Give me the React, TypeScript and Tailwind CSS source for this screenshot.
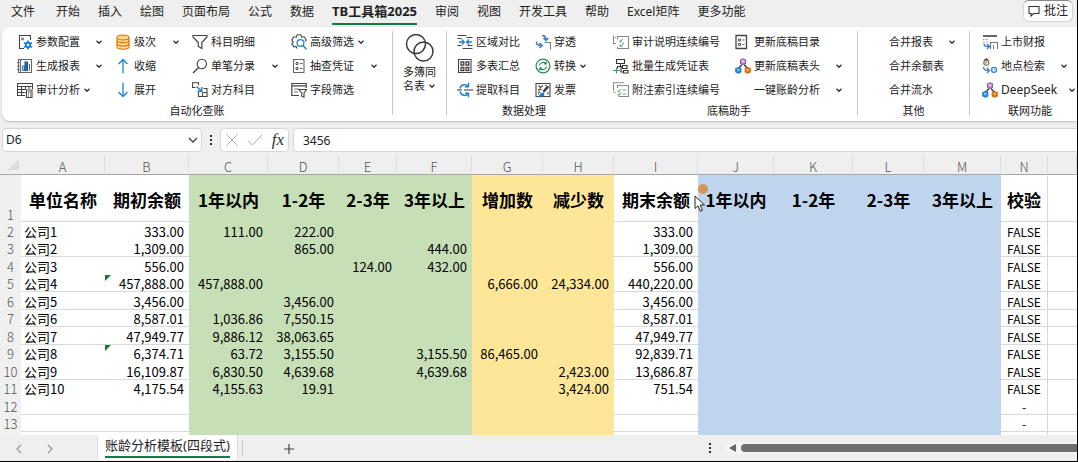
import type { ReactNode } from "react";
import clsx from "clsx";

type Item = {
  label: string;
  icon?: ReactNode;
  caret?: "inline" | "end" | "inset";
};

const Icon = ({ children }: { children?: ReactNode }) => (
  <svg
    viewBox="0 0 16 16"
    className="w-4 h-4 shrink-0"
    fill="none"
    stroke="#444"
    strokeWidth="1.1"
  >
    {children}
  </svg>
);

const Caret = ({ className }: { className?: string }) => (
  <svg
    viewBox="0 0 8 8"
    className={clsx("w-2 h-2 shrink-0", className)}
    fill="none"
    stroke="#333"
    strokeWidth="1.3"
  >
    <path d="M1.5 2.8 4 5.3 6.5 2.8" />
  </svg>
);

const blue = "#1e82d2";

const configIcon = (
  <Icon>
    <path d="M7 14.5H2.5v-13h11V6" />
    <circle cx="5.5" cy="5" r="1" strokeWidth="0.9" />
    <g stroke={blue}>
      <path d="M11 6.5v9M7 8.700l8 4.600M7 13.300l8-4.600" strokeWidth="1.8" />
      <circle cx="11" cy="11" r="2.6" fill={blue} />
      <circle cx="11" cy="11" r="0.7" fill="#fff" stroke="#fff" />
    </g>
  </Icon>
);

const reportIcon = (
  <Icon>
    <path d="M1.5 1.5h13v13h-13zM3.5 1.5v13M0 4.5h2.5M0 8h2.5M0 11.5h2.5" stroke="#666" />
    <path d="M5.5 12.5V8h2v4.500z" fill="#9cc8ee" stroke="#4b88be" />
    <path d="M8 12.500V4h2.500v8.500z" fill="#1a70b8" stroke="#185c98" />
    <path d="M12.500 12.500V6" stroke="#666" />
  </Icon>
);

const auditIcon = (
  <Icon>
    <path d="M8 13.500H.5v-12h15V7M.5 4.500h15M.5 7.500h8M.5 10.500h8M4.500 4.500v9M8.500 4.500V8M12 4.500V7" />
    <path d="M9.500 8h5.500v7.500H9.500z" fill="#fff" />
    <path d="M11 10h3M11 12h1M13 12h1M11 14h1M13 14h1" />
  </Icon>
);

const levelIcon = (
  <Icon>
    <g stroke="#d87300" fill="#ffd890">
      <path d="M2 3.500v9.500c0 3 12 3 12 0V3.500" />
      <path d="M2 6.500c0 3 12 3 12 0M2 9.800c0 3 12 3 12 0" fill="none" />
      <ellipse cx="8" cy="3.500" rx="6" ry="2.500" />
    </g>
  </Icon>
);

const upIcon = (
  <Icon>
    <path d="M8 15.500V1.500M3.500 6 8 1.500 12.500 6" stroke={blue} strokeWidth="1.300" />
  </Icon>
);

const downIcon = (
  <Icon>
    <path d="M8 .5v14M3.500 10 8 14.500 12.500 10" stroke={blue} strokeWidth="1.300" />
  </Icon>
);

const funnelIcon = (
  <Icon>
    <path d="M1 1.500h14v1.500L9.800 8.500v6l-3.500-2v-4L1 3z" strokeWidth="1.200" />
  </Icon>
);

const searchIcon = (
  <Icon>
    <circle cx="9.800" cy="6" r="4.700" />
    <path d="M6.500 9.500 1 15" strokeWidth="1.400" />
  </Icon>
);

const linkIcon = (
  <Icon>
    <path d="M3.500 5.500h-3V.8h6v2.500M6.500 10v4.500H15v-8h-3.500M10.500 10.500h4.500M10.500 10.500v4" />
    <path d="M4.500 4.500 9.500 9M9.800 5v4.300H5.500" stroke={blue} strokeWidth="1.500" />
  </Icon>
);

const gearSearchIcon = (
  <Icon>
    <path d="M6 14.500 5.200 12.500 2.800 12.800.8 9.500 2.300 8 .8 6l2-3.200 2.500.4L6.200.8h3.600l.9 2.400 2.500-.4 2 3.200-1 1.500" />
    <circle cx="9.500" cy="9" r="3.400" stroke={blue} strokeWidth="1.300" />
    <path d="m12 11.500 3.500 3.700" stroke={blue} strokeWidth="1.500" />
  </Icon>
);

const checklistIcon = (
  <Icon>
    <path d="M2.500 1.500h10.500v13H2.500z" stroke="#666" />
    <path d="M5 4.500h2v2H5zM5 9.500h2v2H5zM9 5.500h2.500M9 10.500h2.500" strokeWidth="0.900" />
  </Icon>
);

const fieldFilterIcon = (
  <Icon>
    <path d="M8 13.500H.8v-12h14.400V6M.8 3.800h14.400" strokeWidth="1.200" />
    <path d="M3 7h5M3 10h4" stroke="#777" />
    <path d="M8 7.500h7.500L13 11v4.200l-2.300-1V11z" fill="#fff" />
  </Icon>
);

const compareIcon = (
  <Icon>
    <path d="M.5 1.500h9M.5 4.500h4M9.500 3.500h6M.5 11.500h4M5.500 14.500h10M10.500 11.500h5" />
    <path d="M2 8h5M4.800 5.500 7.300 8l-2.500 2.500M15 8h-5M12 5.500 9.500 8l2.500 2.500" stroke={blue} strokeWidth="1.300" />
  </Icon>
);

const gridIcon = (
  <Icon>
    <path d="M1.500 1.500h12.500v13H1.500z" />
    <path d="M4 4h2.800v3H4zM9 4h2.800v3H9zM4 9.500h2.800v3H4zM9 9.500h2.800v3H9z" strokeWidth="1.300" />
  </Icon>
);

const extractIcon = (
  <Icon>
    <path d="M0 8h5M7 8h9" stroke="#333" strokeWidth="1.200" />
    <path d="M11.500 4.500A4.800 4.800 0 0 0 3 6.500M3 9.500a4.800 4.800 0 0 0 8.500 2M11.500.8v4H7.800M11.500 15.200v-4H8" stroke={blue} strokeWidth="1.400" />
  </Icon>
);

const traceIcon = (
  <Icon>
    <path d="M7 1.500c3 0 4 2 4 4.500M8.500 4 11 6.500 13.500 4M1.500 7.500c-.5 3 1.500 4 4.500 4M4.500 9 7 11.500 4.500 14" stroke="#3a7dc4" strokeWidth="1.500" />
    <path d="M9.500 8.500h6v7" stroke="#777" />
  </Icon>
);

const convertIcon = (
  <Icon>
    <g stroke="#2c8a57">
      <circle cx="8" cy="8" r="6.900" strokeWidth="1.300" />
      <path d="M4.500 7.500a3.600 3.600 0 0 1 6.500-1.600M11.500 8.500A3.600 3.600 0 0 1 5 10.100M11.200 3.500V6H8.700M4.800 12.500V10h2.500" strokeWidth="1.200" />
    </g>
  </Icon>
);

const invoiceIcon = (
  <Icon>
    <path d="M1 1.500h14v13H1z" />
    <path d="M3.500 3.500l2 2 2.500-2M3 8.500l2-1.500 1.500 1M3 11.500l2-2M10 3.500h1.500M13 10v2.500" />
    <path d="M14 4.500 8.500 10.500M12.500 4 8 9.500" strokeWidth="1.200" />
    <path d="M4 15c1-.5.5-3 2.500-3.500s3 .5 2 2-2.500 1.500-4.500 1.500z" fill={blue} stroke="#1d6fb8" />
  </Icon>
);

const numberIcon = (
  <Icon>
    <path d="M.5 1.500V9.500H3M2 3.500h1M4.500 5.500v-3h11v12h-11v-2M9 2.500h6" stroke="#888" />
    <path d="m6.500 6.500 1 1.500 2-3M6.500 11l1.500 1.500 3-4" stroke="#58a272" />
  </Icon>
);

const voucherIcon = (
  <Icon>
    <path d="M3.500 1.500h8v4h-8zM7.500 5.500v3M4.500 10.500V8.500h5M9.500 7.500h4.500v3H9.500zM10.500 12.500h4.500v2.500h-4.500zM8 9v5h2.500" stroke="#333" />
    <path d="M0 12.500h7M3.500 9.500v6" stroke="#3f9b62" />
  </Icon>
);

const noteIcon = (
  <Icon>
    <path d="M.5 9V.8H11M2.500 10.500H.5M4.500 6V3.500h11v11h-10" stroke="#888" />
    <path d="m4.500 8.500 1 1.500 2-3M4.500 12l1.500 1.500 2-3M9.500 8h4M9.500 12h4" stroke="#7ba98a" />
  </Icon>
);

const catalogIcon = (
  <Icon>
    <path d="M1 1.500h10.500v13H1z" strokeWidth="1.300" />
    <path d="M3.500 5h2v2h-2zM3.500 9.500h2v2h-2zM7.500 6H9.500M7.500 10.500h2" strokeWidth="0.900" />
  </Icon>
);

const cubesIcon = (
  <Icon>
    <path d="M7 6.500 3.500 10.500M9 6.500l3.500 4" stroke="#333" strokeWidth="1.300" />
    <path d="m8 .8 2.500 1v3.500L8 6.500l-2.500-1.200V1.800z" fill="#c49acb" stroke="#955ba5" />
    <path d="m3.300 9.500 2.500 1v3.500l-2.500 1.200L.8 14v-3.500z" fill="#2f93e0" stroke="#1775c4" />
    <path d="m12.700 9.500 2.500 1v3.500l-2.500 1.200-2.500-1.200v-3.500z" fill="#e87c1a" stroke="#d06400" />
    <path d="M2 11.500l1.300.6 1.300-.6M11.400 11.500l1.300.6 1.300-.6M6.800 2.800l1.200.6 1.200-.6" stroke="#fff" strokeWidth="0.800" />
  </Icon>
);

const marketIcon = (
  <Icon>
    <path d="M1 2h14" stroke="#666" strokeWidth="2" />
    <path d="M1 5.500h1.500M4 5.500h1.500M1 8h1.500M4 8h1.500" stroke="#999" />
    <path d="M8.500 15V8.500h7V15M11.500 15v-4" stroke="#777" />
    <path d="M2 9.500c0 3 2 3 5 3M5 10l2.500 2.500L5 15" stroke="#3a7dc4" strokeWidth="1.300" />
  </Icon>
);

const placeIcon = (
  <Icon>
    <path d="M2 2.500 4.500.8 6.500 2.500M3 1.500h3" stroke="#555" />
    <circle cx="4.300" cy="4.800" r="2.500" stroke="#666" />
    <path d="m3 5 2-1" stroke="#e07a1a" strokeWidth="1.500" />
    <path d="M1.500 9c0 3 2 3.500 5 3.500M5 10l2.500 2.500L5 15" stroke="#3a7dc4" strokeWidth="1.300" />
    <circle cx="12" cy="11.800" r="2.600" fill="#9cc7ec" stroke="#3a7dc4" />
    <path d="M10.500 11h3M10.500 12.800h3" stroke="#fff" strokeWidth="0.700" />
  </Icon>
);

const autoCheck: { width: string; items: Item[] }[] = [
  {
    width: "w-[86px]",
    items: [
      { label: "参数配置", icon: configIcon, caret: "end" },
      { label: "生成报表", icon: reportIcon, caret: "end" },
      { label: "审计分析", icon: auditIcon, caret: "inline" },
    ],
  },
  {
    width: "w-[65px]",
    items: [
      { label: "级次", icon: levelIcon, caret: "end" },
      { label: "收缩", icon: upIcon },
      { label: "展开", icon: downIcon },
    ],
  },
  {
    width: "w-[87px]",
    items: [
      { label: "科目明细", icon: funnelIcon },
      { label: "单笔分录", icon: searchIcon, caret: "end" },
      { label: "对方科目", icon: linkIcon },
    ],
  },
  {
    width: "w-[87px]",
    items: [
      { label: "高级筛选", icon: gearSearchIcon, caret: "inline" },
      { label: "抽查凭证", icon: checklistIcon, caret: "end" },
      { label: "字段筛选", icon: fieldFilterIcon },
    ],
  },
];

const dataProcess: { width: string; items: Item[] }[] = [
  {
    width: "w-[66px]",
    items: [
      { label: "区域对比", icon: compareIcon },
      { label: "多表汇总", icon: gridIcon },
      { label: "提取科目", icon: extractIcon },
    ],
  },
  {
    width: "w-[66px]",
    items: [
      { label: "穿透", icon: traceIcon },
      { label: "转换", icon: convertIcon, caret: "inline" },
      { label: "发票", icon: invoiceIcon },
    ],
  },
];

const draftHelper: { width: string; items: Item[] }[] = [
  {
    width: "w-[110px]",
    items: [
      { label: "审计说明连续编号", icon: numberIcon },
      { label: "批量生成凭证表", icon: voucherIcon },
      { label: "附注索引连续编号", icon: noteIcon },
    ],
  },
  {
    width: "w-[108px]",
    items: [
      { label: "更新底稿目录", icon: catalogIcon },
      { label: "更新底稿表头", icon: cubesIcon, caret: "end" },
      { label: "一键账龄分析", caret: "end" },
    ],
  },
];

const others: { width: string; items: Item[] }[] = [
  {
    width: "w-[86px]",
    items: [
      { label: "合并报表", caret: "end" },
      { label: "合并余额表" },
      { label: "合并流水" },
    ],
  },
];

const online: { width: string; items: Item[] }[] = [
  {
    width: "w-[94px]",
    items: [
      { label: "上市财报", icon: marketIcon },
      { label: "地点检索", icon: placeIcon, caret: "inset" },
      { label: "DeepSeek", icon: cubesIcon, caret: "end" },
    ],
  },
];

const RibbonGroup = ({
  title,
  columns,
  padding,
}: {
  title: string;
  columns: { width: string; items: Item[] }[];
  padding: string;
}) => (
  <section className="flex flex-col shrink-0">
    <div className={clsx("flex gap-3", padding)}>
      {columns.map((column, i) => (
        <div key={i} className={clsx("flex flex-col", column.width)}>
          {column.items.map((item) => (
            <button
              key={item.label}
              type="button"
              className="flex items-center h-6 whitespace-nowrap"
            >
              {item.icon ?? <span className="w-4 shrink-0" />}
              <span
                className={clsx(
                  "ml-[3px]",
                  item.label === "DeepSeek" && "text-[12px]"
                )}
              >
                {item.label}
              </span>
              {item.caret && (
                <Caret
                  className={clsx(
                    item.caret === "inline" && "ml-[3px]",
                    item.caret === "end" && "ml-auto",
                    item.caret === "inset" && "ml-auto mr-2"
                  )}
                />
              )}
            </button>
          ))}
        </div>
      ))}
    </div>
    <h2 className="text-center leading-[18px]">{title}</h2>
  </section>
);

const Divider = () => (
  <div className="w-px h-[84px] mt-px bg-[#c8c8c8] shrink-0" />
);

const tabs = [
  "开始",
  "插入",
  "绘图",
  "页面布局",
  "公式",
  "数据",
  "TB工具箱2025",
  "审阅",
  "视图",
  "开发工具",
  "帮助",
  "Excel矩阵",
  "更多功能",
];

const green = "bg-[#c6dfb6]";
const yellow = "bg-[#fee699]";
const sky = "bg-[#bed5ed]";

const columns = [
  { key: "A", title: "单位名称", width: "w-[84px]" },
  { key: "B", title: "期初余额", width: "w-[84px]" },
  { key: "C", title: "1年以内", width: "w-[79px]", fill: green },
  { key: "D", title: "1-2年", width: "w-[71px]", fill: green },
  { key: "E", title: "2-3年", width: "w-[58px]", fill: green },
  { key: "F", title: "3年以上", width: "w-[75px]", fill: green },
  { key: "G", title: "增加数", width: "w-[71px]", fill: yellow },
  { key: "H", title: "减少数", width: "w-[71px]", fill: yellow },
  { key: "I", title: "期末余额", width: "w-[84px]" },
  { key: "J", title: "1年以内", width: "w-[76px]", fill: sky },
  { key: "K", title: "1-2年", width: "w-[79px]", fill: sky },
  { key: "L", title: "2-3年", width: "w-[71px]", fill: sky },
  { key: "M", title: "3年以上", width: "w-[77px]", fill: sky },
  { key: "N", title: "校验", width: "w-[47px]" },
  { key: "O", title: "", width: "w-auto" },
];

const rows: Record<string, string>[] = [
  { A: "公司1", B: "333.00", C: "111.00", D: "222.00", I: "333.00", N: "FALSE" },
  { A: "公司2", B: "1,309.00", D: "865.00", F: "444.00", I: "1,309.00", N: "FALSE" },
  { A: "公司3", B: "556.00", E: "124.00", F: "432.00", I: "556.00", N: "FALSE" },
  { A: "公司4", B: "457,888.00", C: "457,888.00", G: "6,666.00", H: "24,334.00", I: "440,220.00", N: "FALSE" },
  { A: "公司5", B: "3,456.00", D: "3,456.00", I: "3,456.00", N: "FALSE" },
  { A: "公司6", B: "8,587.01", C: "1,036.86", D: "7,550.15", I: "8,587.01", N: "FALSE" },
  { A: "公司7", B: "47,949.77", C: "9,886.12", D: "38,063.65", I: "47,949.77", N: "FALSE" },
  { A: "公司8", B: "6,374.71", C: "63.72", D: "3,155.50", F: "3,155.50", G: "86,465.00", I: "92,839.71", N: "FALSE" },
  { A: "公司9", B: "16,109.87", C: "6,830.50", D: "4,639.68", F: "4,639.68", H: "2,423.00", I: "13,686.87", N: "FALSE" },
  { A: "公司10", B: "4,175.54", C: "4,155.63", D: "19.91", H: "3,424.00", I: "751.54", N: "FALSE" },
  { N: "-" },
  { N: "-" },
  {},
];

// rows drawn without a line under them
const unlined = [2, 4, 9, 11];
// cells flagged with the green error corner
const flagged = ["B5", "B9"];

const Sheet = () => (
  <table className="w-full table-fixed border-separate border-spacing-0 text-[13px] leading-[14px] text-black">
    <thead>
      <tr className="h-[20px] text-[#555]">
        <th className="w-[21px] p-0 align-bottom border-b border-[#a6a6a6]">
          <svg viewBox="0 0 11 11" className="w-[11px] h-[11px] mb-1 ml-2">
            <path d="M11 0v11H0z" fill="#dcdcdc" />
          </svg>
        </th>
        {columns.map((col) => (
          <th
            key={col.key}
            scope="col"
            className={clsx(
              "p-0 align-bottom font-light border-b border-b-[#a6a6a6] border-r border-r-[#dedede]",
              col.width
            )}
          >
            {col.key === "O" ? "" : col.key}
          </th>
        ))}
      </tr>
    </thead>
    <tbody>
      <tr className="h-[47px]">
        <th
          scope="row"
          className="p-0 font-light align-bottom bg-[#f0f0f0] text-[#555]"
        >
          1
        </th>
        {columns.map((col) => (
          <th
            key={col.key}
            className={clsx(
              "p-0 pt-1 text-[17px] font-bold leading-6 whitespace-nowrap border-b",
              col.fill
                ? [col.fill, "border-b-transparent"]
                : "bg-white border-b-[#d9d9d9]",
              col.key === "N" && "border-r border-r-[#d9d9d9]",
              col.key === "J" && "relative"
            )}
          >
            {col.title}
            {col.key === "J" && (
              <>
                <span className="absolute left-0 top-[9px] w-[10px] h-[10px] rounded-full bg-[#d6955b]" />
                <svg
                  viewBox="0 0 12 18"
                  className="absolute -left-1 top-5 w-3 h-[18px]"
                  fill="#fff"
                  stroke="#222"
                  strokeWidth="1"
                >
                  <path d="M1 1v12.500l3-2.600 2.200 5.300 2.200-1L6.200 10h4.300z" />
                </svg>
              </>
            )}
          </th>
        ))}
      </tr>
      {rows.map((row, i) => {
        const number = i + 2;
        return (
          <tr key={number} className={i % 2 ? "h-[17px]" : "h-[18px]"}>
            <th
              scope="row"
              className="p-0 pt-px font-light bg-[#f0f0f0] text-[#555]"
            >
              {number === 14 ? "" : number}
            </th>
            {columns.map((col) => (
              <td
                key={col.key}
                className={clsx(
                  "p-0 pt-[2px] whitespace-nowrap border-b",
                  col.key === "A" && "pl-[3px]",
                  col.key === "N" && "text-center text-[12px] border-r border-r-[#d9d9d9]",
                  col.key !== "A" && col.key !== "N" && "pr-[5px] text-right",
                  col.fill ?? "bg-white",
                  col.fill || unlined.includes(number)
                    ? "border-b-transparent"
                    : "border-b-[#d9d9d9]",
                  flagged.includes(col.key + number) && "relative"
                )}
              >
                {flagged.includes(col.key + number) && (
                  <svg
                    viewBox="0 0 6 6"
                    className="absolute left-0 top-0 w-[6px] h-[6px]"
                  >
                    <path d="M0 0h6L0 6z" fill="#0f7b2e" />
                  </svg>
                )}
                {row[col.key]}
              </td>
            ))}
          </tr>
        );
      })}
    </tbody>
  </table>
);

const App = () => {
  return (
    <div className="flex flex-col h-screen overflow-hidden bg-[#efefef] border-r border-b border-black font-['Noto_Sans','Noto_Sans_CJK_SC',sans-serif] text-[#222]">
      <nav className="flex items-start shrink-0 h-[27px] pl-[11px] pr-1 text-[12px] whitespace-nowrap">
        <a href="#file" className="mr-[21px] leading-[23px]">
          文件
        </a>
        <div className="flex gap-[18px]">
          {tabs.map((tab) => (
            <a
              key={tab}
              href={`#${tab}`}
              className={clsx(
                "leading-[23px]",
                tab === "TB工具箱2025" &&
                  "text-[13px] font-bold border-b-2 border-[#107c41]"
              )}
            >
              {tab}
            </a>
          ))}
        </div>
        <button
          type="button"
          className="flex items-center gap-1 h-[22px] px-1 ml-auto bg-white border border-t-[#888] border-[#d4d4d4] rounded-md"
        >
          <svg
            viewBox="0 0 12 12"
            className="w-3 h-3"
            fill="none"
            stroke="#333"
            strokeWidth="1.1"
          >
            <path d="M1 1.500h10v7H5.500L3 11V8.500H1z" />
          </svg>
          批注
        </button>
      </nav>

      <div className="flex shrink-0 h-[94px] pt-[3px] ml-[2px] overflow-hidden bg-white rounded-l-lg shadow-[0_1px_2px_#bbb] text-[11px]">
        <RibbonGroup
          title="自动化查账"
          columns={autoCheck}
          padding="pl-[15px] pr-[14px]"
        />
        <Divider />
        <button
          type="button"
          className="flex flex-col items-center w-[53px] pt-[3px] shrink-0"
        >
          <svg
            viewBox="0 0 30 30"
            className="w-[30px] h-[30px]"
            fill="none"
            stroke="#3b3b3b"
            strokeWidth="1.500"
          >
            <circle cx="11" cy="11" r="9.500" />
            <circle cx="18.500" cy="18.500" r="9.500" />
          </svg>
          <span className="mt-[2px] leading-[14px]">
            多簿同
            <br />
            <span className="flex items-center">
              名表
              <Caret className="ml-[3px]" />
            </span>
          </span>
        </button>
        <Divider />
        <RibbonGroup title="数据处理" columns={dataProcess} padding="pl-[10px]" />
        <RibbonGroup
          title="底稿助手"
          columns={draftHelper}
          padding="pl-3 pr-[14px]"
        />
        <Divider />
        <RibbonGroup title="其他" columns={others} padding="pl-3 pr-[13px]" />
        <Divider />
        <RibbonGroup title="联网功能" columns={online} padding="pl-3 pr-[14px]" />
      </div>

      <div className="flex items-center shrink-0 h-6 mt-[7px] pl-[2px] text-[12px]">
        <div className="flex items-center w-[200px] h-full px-[3px] bg-white border border-[#d6d6d6] rounded">
          <input
            aria-label="名称框"
            defaultValue="D6"
            className="w-full min-w-0 bg-transparent outline-none"
          />
          <button type="button" aria-label="展开名称框">
            <svg
              viewBox="0 0 10 10"
              className="w-[10px] h-[10px]"
              fill="none"
              stroke="#444"
              strokeWidth="1.400"
            >
              <path d="m1 3 4 4 4-4" />
            </svg>
          </button>
        </div>
        <svg viewBox="0 0 4 12" className="w-1 h-3 mx-[7px]" fill="#333">
          <path d="M1 1h2v2H1zM1 5h2v2H1zM1 9h2v2H1z" />
        </svg>
        <div className="flex items-center justify-between w-[69px] h-full px-1 bg-white border border-[#d6d6d6] rounded">
          <button type="button" aria-label="取消">
            <svg viewBox="0 0 14 14" className="w-[14px] h-[14px]" fill="none" stroke="#aaa">
              <path d="m1.500 1.500 11 11M12.500 1.500l-11 11" />
            </svg>
          </button>
          <button type="button" aria-label="输入">
            <svg viewBox="0 0 16 14" className="w-4 h-[14px]" fill="none" stroke="#aaa">
              <path d="m1 7.500 4.500 4.500L15 2" />
            </svg>
          </button>
          <button
            type="button"
            className="font-['Liberation_Serif',serif] text-[17px] italic leading-5 text-[#333]"
          >
            fx
          </button>
        </div>
        <input
          aria-label="编辑栏"
          defaultValue="3456"
          className="flex-1 h-full min-w-0 pl-[9px] ml-1 bg-white border border-r-0 border-[#d6d6d6] rounded-l outline-none"
        />
      </div>

      <main className="flex-1 min-h-0 mt-[3px] overflow-hidden font-['Noto_Sans_CJK_SC',sans-serif]">
        <Sheet />
      </main>

      <footer className="flex items-start shrink-0 h-[26px]">
        <button type="button" aria-label="上一个工作表" className="mt-2 ml-[14px]">
          <svg viewBox="0 0 10 12" className="w-[10px] h-3" fill="none" stroke="#999" strokeWidth="1.300">
            <path d="M7 2 3 6l4 4" />
          </svg>
        </button>
        <button type="button" aria-label="下一个工作表" className="mt-2 ml-[21px]">
          <svg viewBox="0 0 10 12" className="w-[10px] h-3" fill="none" stroke="#999" strokeWidth="1.300">
            <path d="m3 2 4 4-4 4" />
          </svg>
        </button>
        <div className="h-[25px] px-[7px] ml-[42px] bg-white rounded-b border-x border-[#ddd]">
          <button
            type="button"
            className="block text-[13px] leading-[21px] border-b-2 border-[#107c41] whitespace-nowrap"
          >
            账龄分析模板(四段式)
          </button>
        </div>
        <div className="w-px h-4 mt-[5px] ml-1 bg-[#c8c8c8]" />
        <button type="button" aria-label="新建工作表" className="mt-2 ml-10">
          <svg viewBox="0 0 12 12" className="w-3 h-3" fill="none" stroke="#444" strokeWidth="1.200">
            <path d="M6 1v10M1 6h10" />
          </svg>
        </button>
        <div className="flex items-center w-[369px] h-full ml-auto">
          <svg viewBox="0 0 4 12" className="w-1 h-3" fill="#333">
            <path d="M1 1h2v2H1zM1 5h2v2H1zM1 9h2v2H1z" />
          </svg>
          <div className="flex items-center flex-1 h-3 gap-[5px] pl-1 ml-[13px] rounded-l-full bg-[#f5f5f5]">
            <svg viewBox="0 0 7 8" className="w-[7px] h-2" fill="#666">
              <path d="M7 0v8L0 4z" />
            </svg>
            <div className="flex-1 h-2 rounded-l-full bg-[#707070]" />
          </div>
        </div>
      </footer>
    </div>
  );
};

export default App;
